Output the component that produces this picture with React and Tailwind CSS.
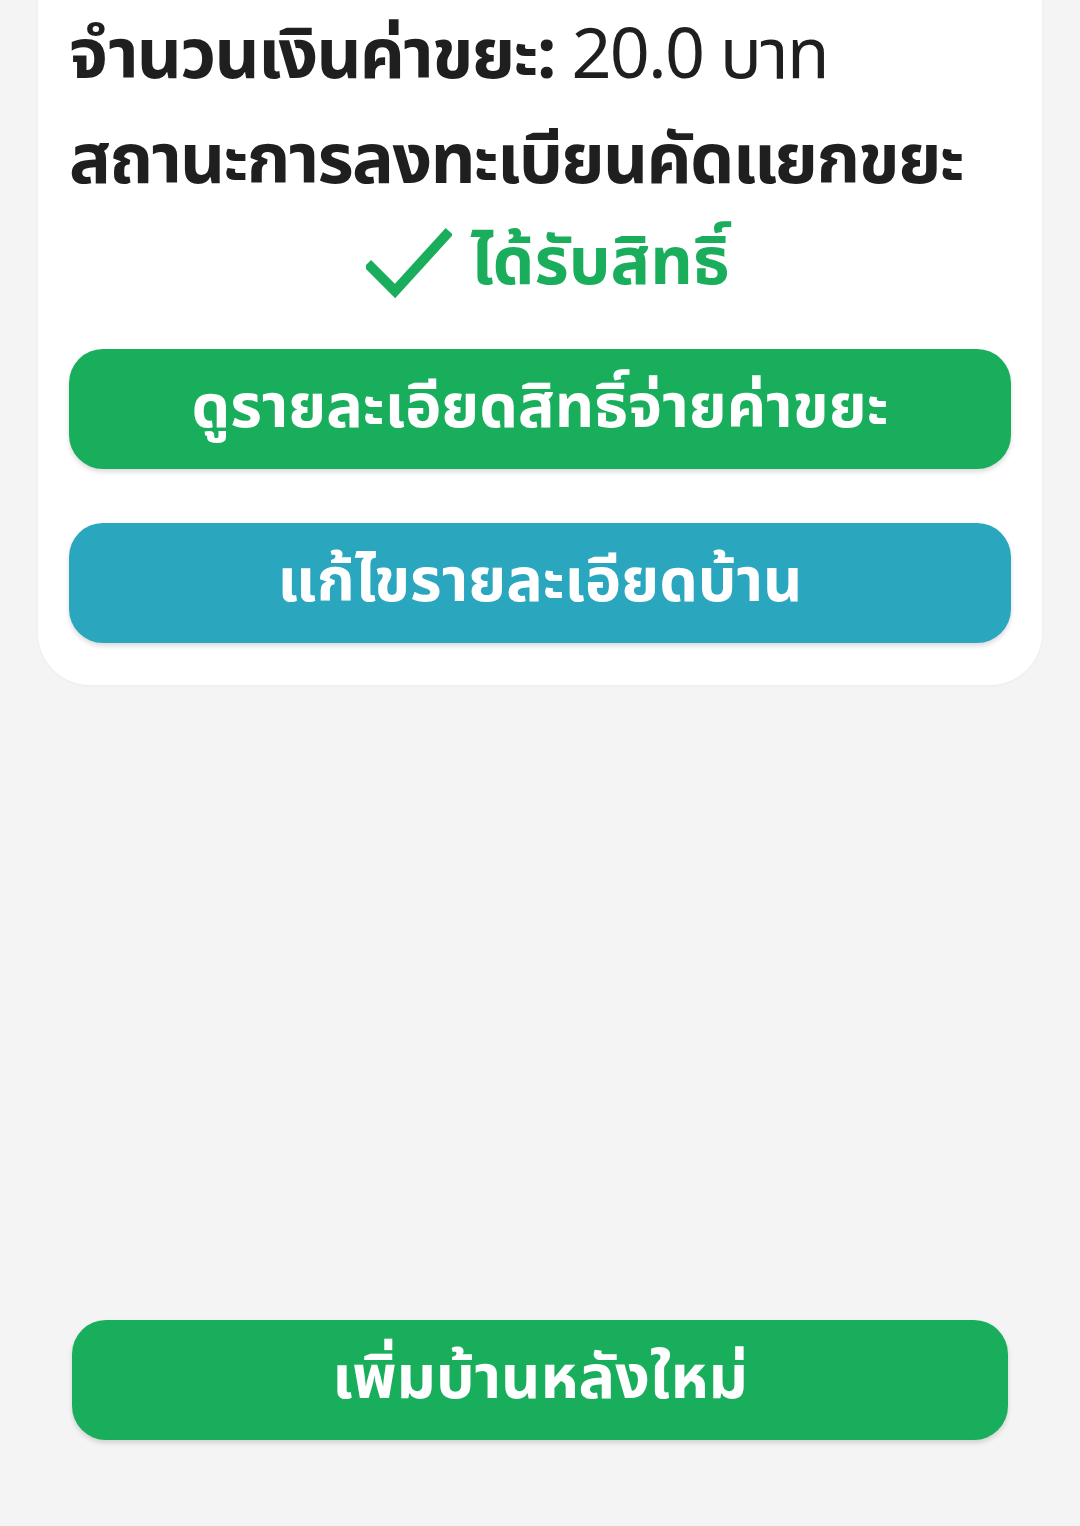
import React from 'react';

const thai = { fontFamily: '"Noto Sans Thai", "Noto Sans", "DejaVu Sans", sans-serif' };

function CheckIcon() {
  return (
    <svg width="86" height="74" viewBox="0 0 86 74" fill="none">
      <path d="M5 40 L29 64 L80 8" stroke="#1aad5c" strokeWidth="10" strokeLinecap="square" strokeLinejoin="miter" />
    </svg>
  );
}

export default function App() {
  return (
    <div className="min-h-[1526px] bg-[#f4f4f4] flex flex-col" style={thai}>
      <div className="mx-[38px] bg-white rounded-b-[52px] px-[31px] pb-[42px] shadow-[0_1px_3px_rgba(0,0,0,0.04)]">
        <div className="pt-[5px] text-[#1f1f1f] text-[70px] leading-[105px] tracking-tight">
          <p className="whitespace-nowrap">
            <span className="font-bold">จำนวนเงินค่าขยะ:</span>
            <span className="font-normal"> 20.0 บาท</span>
          </p>
          <p className="font-bold whitespace-nowrap">สถานะการลงทะเบียนคัดแยกขยะ</p>
        </div>
        {/* สถานะ */}
        <div className="flex items-center justify-center gap-[18px] mt-[4px] h-[90px] pl-[16px]">
          <CheckIcon />
          <span className="text-[#1aad5c] font-bold text-[66px]">ได้รับสิทธิ์</span>
        </div>
        <div className="flex flex-col gap-[54px] mt-[40px]">
          <button className="h-[120px] w-full rounded-[34px] bg-[#19ae5c] text-white font-bold text-[61px] shadow-[0_3px_5px_rgba(0,0,0,0.14)]">
            ดูรายละเอียดสิทธิ์จ่ายค่าขยะ
          </button>
          <button className="h-[120px] w-full rounded-[34px] bg-[#2aa6bf] text-white font-bold text-[61px] shadow-[0_3px_5px_rgba(0,0,0,0.14)]">
            แก้ไขรายละเอียดบ้าน
          </button>
        </div>
      </div>
      <div className="mt-auto mx-[72px] pb-[86px]">
        <button className="h-[120px] w-full rounded-[34px] bg-[#19ae5c] text-white font-bold text-[61px] shadow-[0_3px_5px_rgba(0,0,0,0.14)]">
          เพิ่มบ้านหลังใหม่
        </button>
      </div>
    </div>
  );
}
